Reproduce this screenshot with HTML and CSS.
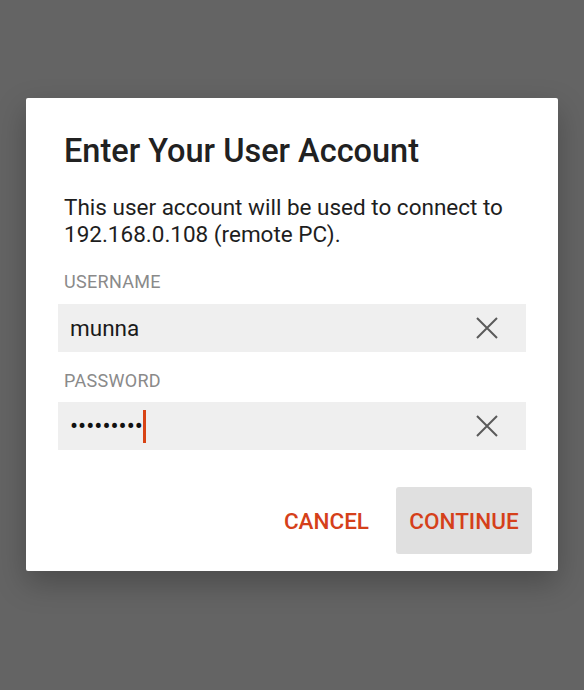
FILE: index.html
```html
<!DOCTYPE html>
<html>
<head>
<meta charset="utf-8">
<link rel="stylesheet" href="styles.css">
</head>
<body>
<div class="dialog">
  <h1 class="title">Enter Your User Account</h1>
  <p class="desc">This user account will be used to connect to 192.168.0.108 (remote PC).</p>
  <div class="label first">USERNAME</div>
  <div class="field">
    <span class="value">munna</span>
    <svg class="clear" width="22" height="22" viewBox="0 0 22 22"><path d="M1 1L21 21M21 1L1 21" stroke="#5a5a5a" stroke-width="2" fill="none"/></svg>
  </div>
  <div class="label second">PASSWORD</div>
  <div class="field">
    <span class="value"><span class="dots">•••••••••</span><span class="cursor"></span></span>
    <svg class="clear" width="22" height="22" viewBox="0 0 22 22"><path d="M1 1L21 21M21 1L1 21" stroke="#5a5a5a" stroke-width="2" fill="none"/></svg>
  </div>
  <div class="actions">
    <button class="btn">CANCEL</button>
    <button class="btn primary">CONTINUE</button>
  </div>
</div>
</body>
</html>
```
FILE: styles.css
```css
html, body {
  margin: 0;
  padding: 0;
}
body {
  background: #646464;
  width: 584px;
  height: 690px;
  padding-top: 98px;
  box-sizing: border-box;
  font-family: Roboto, "Liberation Sans", sans-serif;
}
.dialog {
  margin-left: 26px;
  width: 532px;
  height: 473px;
  background: #ffffff;
  border-radius: 2px;
  box-shadow: 0 12px 30px rgba(0, 0, 0, 0.25);
  box-sizing: border-box;
  padding: 34px 26px 0 32px;
}
.title {
  margin: 0;
  padding-left: 6px;
  font-size: 32.5px;
  font-weight: 500;
  line-height: 38px;
  color: #212121;
}
.desc {
  margin: 24px 0 0;
  padding-left: 6px;
  font-size: 22.5px;
  line-height: 27px;
  color: #1e1e1e;
}
.label {
  padding-left: 6px;
  font-size: 18px;
  line-height: 20px;
  letter-spacing: 0.3px;
  color: #8a8a8a;
}
.label.first {
  margin-top: 24px;
}
.label.second {
  margin-top: 19px;
}
.field {
  margin-top: 12px;
  width: 468px;
  height: 48px;
  background: #efefef;
  display: flex;
  align-items: center;
  justify-content: space-between;
  padding: 0 28px 0 12px;
  box-sizing: border-box;
}
.label.second + .field {
  margin-top: 11px;
}
.value {
  font-size: 22.5px;
  color: #1a1a1a;
  display: flex;
  align-items: center;
}
.dots {
  font-size: 24px;
  letter-spacing: 0;
  color: #111;
}
.cursor {
  display: inline-block;
  width: 3px;
  height: 33px;
  background: #d84315;
  margin-left: 0;
}
.clear {
  width: 22px;
  height: 22px;
}
.actions {
  margin-top: 37px;
  display: flex;
  justify-content: flex-end;
}
.btn {
  border: none;
  background: transparent;
  font-family: Roboto, "Liberation Sans", sans-serif;
  font-size: 22.5px;
  font-weight: 500;
  color: #d5401a;
  height: 67px;
  padding: 0 13px;
  border-radius: 3px;
}
.btn:first-child {
  margin-right: 14px;
}
.primary {
  background: #e0e0e0;
  width: 136px;
  padding: 0;
}
```
